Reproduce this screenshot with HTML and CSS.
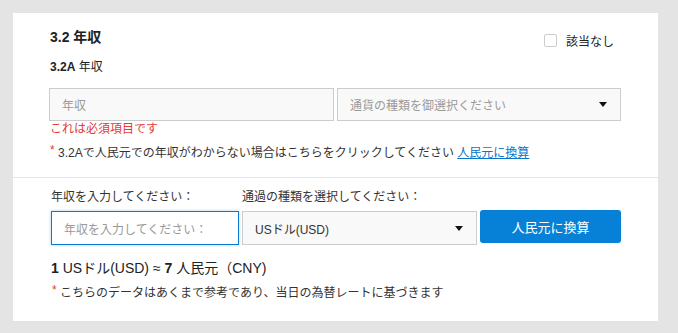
FILE: index.html
```
<!DOCTYPE html>
<html lang="ja">

<head>
    <meta charset="UTF-8" />
    <meta name="viewport" content="width=device-width, initial-scale=1.0" />
    <title>3.2 年収</title>
    <link rel="stylesheet" href="styles.css">
</head>

<body>
    <div class="card">
        <div class="section-top">
            <div class="head">
                <h3 class="title">3.2 年収</h3>
                <label class="na">
                    <span class="checkbox"></span>
                    <span>該当なし</span>
                </label>
            </div>
            <div class="sub"><b>3.2A</b> 年収</div>

            <div class="row-top">
                <div class="field placeholder">年収</div>
                <div class="field select placeholder">
                    <span>通貨の種類を御選択ください</span>
                    <span class="caret"></span>
                </div>
            </div>
            <div class="error">これは必須項目です</div>
            <div class="note"><span class="star">*</span> 3.2Aで人民元での年収がわからない場合はこちらをクリックしてください <a href="#">人民元に換算</a></div>
        </div>

        <div class="section-bottom">
            <div class="grid">
                <div class="label">年収を入力してください：</div>
                <div class="label">通過の種類を選択してください：</div>
                <div></div>

                <div class="field focus placeholder">年収を入力してください：</div>
                <div class="field select">
                    <span>USドル(USD)</span>
                    <span class="caret"></span>
                </div>
                <button class="convert">人民元に換算</button>
            </div>
            <div class="rate"><b>1</b> USドル(USD) ≈ <b>7</b> 人民元（CNY)</div>
            <div class="note"><span class="star">*</span> こちらのデータはあくまで参考であり、当日の為替レートに基づきます</div>
        </div>
    </div>
</body>

</html>
```

FILE: styles.css
```
* {
    box-sizing: border-box;
    margin: 0;
    padding: 0;
}

body {
    font-family: 'Liberation Sans', 'Noto Sans CJK JP', sans-serif;
    background: #e4e4e4;
    color: #333;
    padding: 13px;
    width: 678px;
    height: 333px;
    overflow: hidden;
}

.card {
    background: #fff;
    width: 645px;
    height: 308px;
}

.section-top {
    padding: 14px 37px 16px 36px;
    border-bottom: 1px solid #e6e6e6;
}

.head {
    display: flex;
    justify-content: space-between;
    align-items: flex-start;
}

.title {
    font-size: 14px;
    line-height: 20px;
    font-weight: bold;
    color: #222;
    padding-left: 1px;
}

.na {
    display: flex;
    align-items: center;
    gap: 9px;
    font-size: 12px;
    color: #222;
    margin-top: 5px;
    margin-right: 7px;
}

.checkbox {
    width: 13px;
    height: 13px;
    border: 1px solid #ccc;
    border-radius: 2px;
    background: #fff;
}

.sub {
    font-size: 12px;
    line-height: 20px;
    margin-top: 8px;
    padding-left: 1px;
    color: #222;
}

.row-top {
    display: grid;
    grid-template-columns: 285px 284px;
    gap: 3px;
    margin-top: 11px;
}

.field {
    height: 33px;
    border: 1px solid #ccc;
    background: #f9f9f9;
    font-size: 12px;
    padding: 0 12px;
    display: flex;
    align-items: center;
}

.placeholder {
    color: #999;
}

.select {
    justify-content: space-between;
    padding-right: 13px;
    color: #333;
}

.select.placeholder {
    color: #999;
}

.caret {
    width: 0;
    height: 0;
    border-left: 4px solid transparent;
    border-right: 4px solid transparent;
    border-top: 5px solid #111;
}

.error {
    color: #e53935;
    font-size: 12px;
    line-height: 16px;
    padding-left: 1px;
}

.note {
    font-size: 12px;
    line-height: 16px;
    margin-top: 8px;
    padding-left: 1px;
    color: #333;
}

.star {
    color: #e53935;
    position: relative;
    top: -3px;
}

.note a {
    color: #0a74c9;
    text-decoration: underline;
}

.section-bottom {
    padding: 11px 37px 0 38px;
}

.grid {
    display: grid;
    grid-template-columns: 188px 235px 141px;
    column-gap: 3px;
    row-gap: 6px;
    align-items: start;
}

.label {
    font-size: 12px;
    line-height: 16px;
    color: #333;
}

.focus {
    height: 34px;
    background: #fff;
    border-color: #0a7bd1;
    box-shadow: 0 0 3px rgba(10, 123, 209, 0.35);
}

.grid .select {
    height: 34px;
}

.convert {
    height: 33px;
    margin-top: -1px;
    border: none;
    border-radius: 3px;
    background: #0780d7;
    color: #fff;
    font-family: inherit;
    font-size: 13px;
    cursor: pointer;
}

.rate {
    font-size: 14px;
    line-height: 18px;
    margin-top: 14px;
    color: #222;
}

.section-bottom .note {
    margin-top: 8px;
}
```
